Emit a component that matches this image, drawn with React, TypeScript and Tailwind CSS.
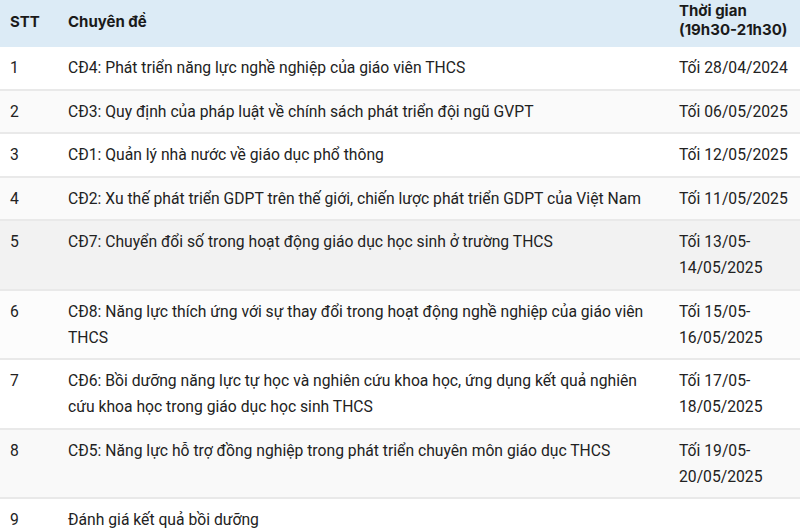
const rows = [
  { stt: "1", topic: "CĐ4: Phát triển năng lực nghề nghiệp của giáo viên THCS", time: "Tối 28/04/2024", bg: "bg-white" },
  { stt: "2", topic: "CĐ3: Quy định của pháp luật về chính sách phát triển đội ngũ GVPT", time: "Tối 06/05/2025", bg: "bg-[#fafafa]" },
  { stt: "3", topic: "CĐ1: Quản lý nhà nước về giáo dục phổ thông", time: "Tối 12/05/2025", bg: "bg-white" },
  { stt: "4", topic: "CĐ2: Xu thế phát triển GDPT trên thế giới, chiến lược phát triển GDPT của Việt Nam", time: "Tối 11/05/2025", bg: "bg-[#fafafa]" },
  { stt: "5", topic: "CĐ7: Chuyển đổi số trong hoạt động giáo dục học sinh ở trường THCS", time: "Tối 13/05-14/05/2025", bg: "bg-[#f2f2f2]" },
  { stt: "6", topic: "CĐ8: Năng lực thích ứng với sự thay đổi trong hoạt động nghề nghiệp của giáo viên THCS", time: "Tối 15/05-16/05/2025", bg: "bg-[#fcfcfc]" },
  { stt: "7", topic: "CĐ6: Bồi dưỡng năng lực tự học và nghiên cứu khoa học, ứng dụng kết quả nghiên cứu khoa học trong giáo dục học sinh THCS", time: "Tối 17/05-18/05/2025", bg: "bg-white" },
  { stt: "8", topic: "CĐ5: Năng lực hỗ trợ đồng nghiệp trong phát triển chuyên môn giáo dục THCS", time: "Tối 19/05-20/05/2025", bg: "bg-[#f9f9f9]" },
  { stt: "9", topic: "Đánh giá kết quả bồi dưỡng", time: "", bg: "bg-white" },
];

const App = () => {
  return (
    <div className="w-[800px] h-[530px] overflow-hidden bg-white text-[#222] font-['Roboto',sans-serif]">
      <table className="w-[812px] border-collapse text-[15.7px] leading-[26px]">
        <colgroup>
          <col className="w-[58px]" />
          <col className="w-[611px]" />
          <col className="w-[143px]" />
        </colgroup>
        <thead>
          <tr className="bg-[#dcebf6] font-['Inter',sans-serif] font-medium text-[15px] leading-[19px] text-[#1a1a1a]">
            <th className="text-left align-middle pl-[10px] pr-2 h-[47px] pb-[4px]">STT</th>
            <th className="text-left align-middle px-[10px] pb-[4px]">Chuyên đề</th>
            <th className="text-left align-middle px-[10px] pb-[7px]">
              Thời gian
              <br />
              (19h30-21h30)
            </th>
          </tr>
        </thead>
        <tbody>
          {rows.map((r) => (
            <tr key={r.stt} className={`${r.bg} border-b-2 border-[#e9e9e9]`}>
              <td className="align-top pl-[10px] pr-2 pt-[8px] pb-[7.5px]">{r.stt}</td>
              <td className="align-top px-[10px] pt-[8px] pb-[7.5px]">{r.topic}</td>
              <td className="align-top px-[10px] pt-[8px] pb-[7.5px] w-[143px]">
                {r.time.includes("-") ? (
                  <>
                    {r.time.split("-")[0]}-
                    <br />
                    {r.time.split("-")[1]}
                  </>
                ) : (
                  r.time
                )}
              </td>
            </tr>
          ))}
        </tbody>
      </table>
    </div>
  );
};

export default App;
